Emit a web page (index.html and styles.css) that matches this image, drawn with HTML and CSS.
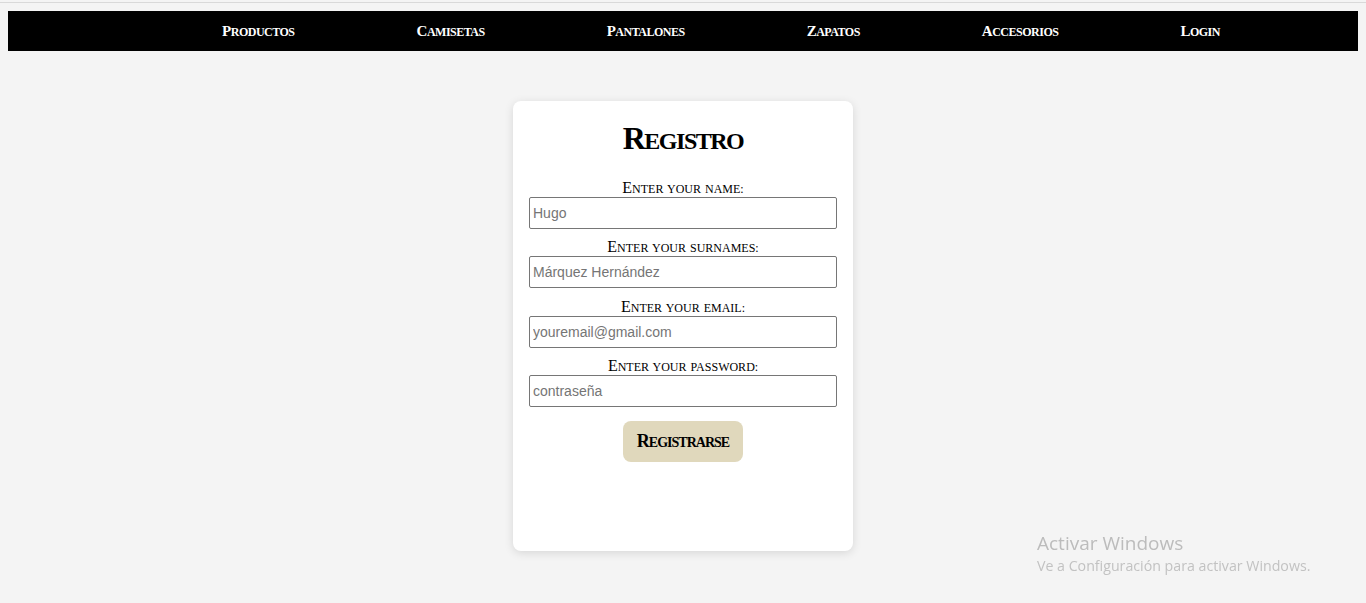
FILE: index.html
```html
<!DOCTYPE html>
<html lang="es">
<head>
<meta charset="utf-8">
<title>Registro</title>
<link rel="stylesheet" href="styles.css">
</head>
<body>
<div class="chrome-line"></div>
<nav class="nav">
  <ul class="nav-list">
    <li><a href="#">Productos</a></li>
    <li><a href="#">Camisetas</a></li>
    <li><a href="#">Pantalones</a></li>
    <li><a href="#">Zapatos</a></li>
    <li><a href="#">Accesorios</a></li>
    <li><a href="#">Login</a></li>
  </ul>
</nav>
<main class="page">
  <form class="card">
    <h1 class="card-title">Registro</h1>
    <label class="field-label" for="name">Enter your name:</label>
    <input class="field-input" id="name" type="text" placeholder="Hugo">
    <label class="field-label" for="surnames">Enter your surnames:</label>
    <input class="field-input" id="surnames" type="text" placeholder="Márquez Hernández">
    <label class="field-label" for="email">Enter your email:</label>
    <input class="field-input" id="email" type="email" placeholder="youremail@gmail.com">
    <label class="field-label" for="password">Enter your password:</label>
    <input class="field-input" id="password" type="password" placeholder="contraseña">
    <button class="submit" type="button"><span class="submit-text">Registrarse</span></button>
  </form>
</main>
<div class="watermark">
  <div class="wm-title">Activar Windows</div>
  <div class="wm-sub">Ve a Configuración para activar Windows.</div>
</div>
</body>
</html>
```
FILE: styles.css
```css
html, body {
  margin: 0;
  background: #f4f4f4;
}
body {
  padding: 2px 8px 0;
  font-family: "Liberation Serif", "Times New Roman", serif;
  height: 603px;
  box-sizing: border-box;
  overflow: hidden;
}
.chrome-line {
  height: 1px;
  background: #d9d9d9;
  margin: 0 -8px 8px;
}
.nav {
  background: #000;
  height: 40px;
}
.nav-list {
  list-style: none;
  margin: 0;
  padding: 0 0 0 76px;
  height: 100%;
  display: flex;
  align-items: center;
  justify-content: center;
  gap: 122px;
}
.nav-list a {
  display: inline-block;
  color: #fff;
  text-decoration: none;
  font-weight: bold;
  text-transform: uppercase;
  font-size: 12px;
  letter-spacing: -0.5px;
}
.nav-list a::first-letter {
  font-size: 15px;
}
.page {
  display: flex;
  justify-content: center;
  padding-top: 50px;
}
.card {
  width: 340px;
  height: 450px;
  box-sizing: border-box;
  background: #fff;
  border-radius: 8px;
  box-shadow: 0 2px 10px rgba(0, 0, 0, 0.12);
  padding: 20px 16px 16px;
  display: flex;
  flex-direction: column;
  align-items: stretch;
}
.card-title {
  margin: 0 0 16px;
  height: 40px;
  text-align: center;
  font-size: 24px;
  line-height: 40px;
  font-weight: bold;
  text-transform: uppercase;
  letter-spacing: -1.5px;
  color: #000;
}
.card-title::first-letter {
  font-size: 32px;
  line-height: 1;
}
.field-label {
  display: block;
  height: 20px;
  box-sizing: border-box;
  padding-top: 4px;
  text-align: center;
  font-size: 12px;
  line-height: 16px;
  text-transform: uppercase;
  word-spacing: 1px;
  color: #000;
}
.field-label::first-letter {
  font-size: 16px;
  line-height: 12px;
}
.field-input {
  flex: none;
  height: 32px;
  box-sizing: border-box;
  margin: 0 0 7.4px;
  padding: 1px 3px;
  border: 1px solid #767676;
  border-radius: 2px;
  font-family: "Liberation Sans", Arial, sans-serif;
  font-size: 14px;
  color: #000;
  background: #fff;
}
.field-input::placeholder {
  color: #757575;
}
.submit {
  align-self: center;
  flex: none;
  margin-top: 6.5px;
  height: 41px;
  padding: 0 14px;
  border: none;
  border-radius: 8px;
  background: #e0d8bc;
  font-family: "Liberation Serif", "Times New Roman", serif;
  color: #000;
}
.submit-text {
  display: inline-block;
  font-size: 14px;
  line-height: 21px;
  font-weight: bold;
  text-transform: uppercase;
  letter-spacing: -1px;
}
.submit-text::first-letter {
  font-size: 18px;
}
.watermark {
  position: fixed;
  left: 1037px;
  top: 531px;
  font-family: "Open Sans", "Noto Sans", sans-serif;
  color: #bcbcbc;
}
.wm-title {
  font-size: 19px;
  line-height: 25px;
}
.wm-sub {
  font-size: 14.2px;
  line-height: 20px;
  color: #c2c2c2;
}
```
